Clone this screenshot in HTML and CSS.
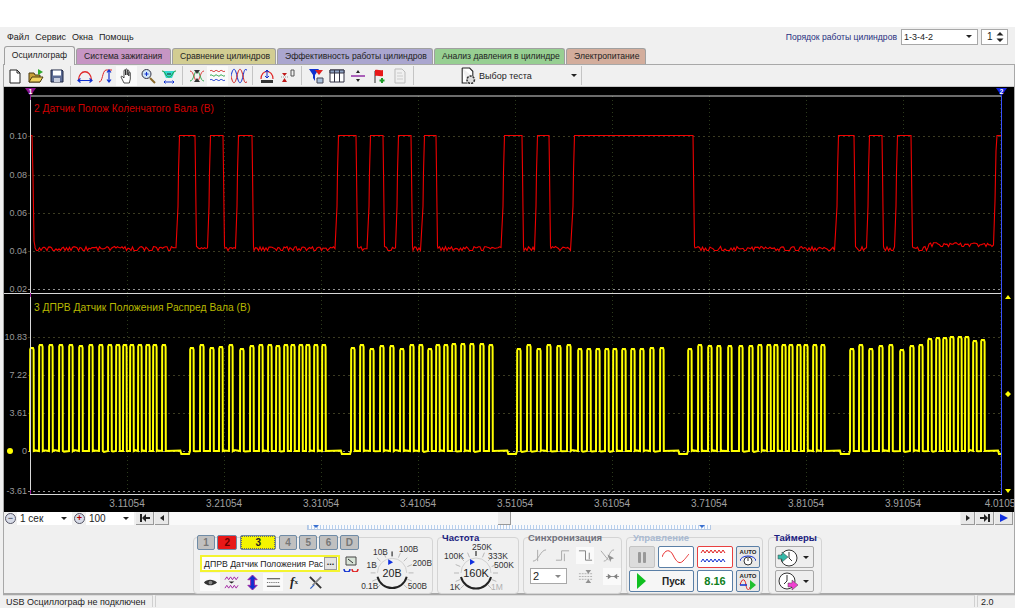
FILE: index.html

```html
<!DOCTYPE html>
<html lang="ru">
<head>
    <meta charset="UTF-8">
    <title>Осциллограф</title>
    <link rel="stylesheet" href="styles.css">
</head>
<body>
<div class="window">
    <div class="top-row">
        <div class="menu">
            <span>Файл</span><span>Сервис</span><span>Окна</span><span>Помощь</span>
        </div>
        <div class="cyl-order">
            <span class="cyl-label">Порядок работы цилиндров</span>
            <div class="combo combo-order">1-3-4-2<i class="arrow-down"></i></div>
            <div class="combo combo-spin">1
                <svg width="8" height="12" viewBox="0 0 8 12"><path d="M4 1l3.500 3.500h-7zM4 11l3.500-3.500h-7z" fill="#222"/></svg>
            </div>
        </div>
    </div>

    <div class="tabs">
        <div class="tab tab-active">Осциллограф</div>
        <div class="tab tab-ignition">Система зажигания</div>
        <div class="tab tab-compare">Сравнение цилиндров</div>
        <div class="tab tab-efficiency">Эффективность работы цилиндров</div>
        <div class="tab tab-pressure">Анализ давления в цилиндре</div>
        <div class="tab tab-power">Электропитание</div>
    </div>

    <div class="workspace">
        <div class="toolbar">
            <div class="tb"><svg viewBox="0 0 16 16"><path d="M3 2h7l3 3v10H3z" fill="#fff" stroke="#222"/><path d="M10 2v3h3" fill="none" stroke="#222"/></svg></div>
            <div class="tb"><svg viewBox="0 0 16 16"><path d="M1 14V5h5l1 2h5v7z" fill="#c9a13a" stroke="#4a3a10"/><path d="M1 14l3-5h11l-3 5z" fill="#f2d460" stroke="#4a3a10"/><path d="M10 1l5 3-5 3z" fill="#2fa82f"/></svg></div>
            <div class="tb"><svg viewBox="0 0 16 16"><path d="M2 2h11l1 1v11H2z" fill="#5d6d95" stroke="#1d2540"/><path d="M4 2.500h8v5H4z" fill="#fff"/><path d="M5 10h6v4H5z" fill="#c8cede"/></svg></div>
            <div class="tb-sep"></div>
            <div class="tb"><svg viewBox="0 0 16 16"><path d="M1.500 12C2 1 14 1 14.500 12" fill="none" stroke="#e02828" stroke-width="1.300"/><path d="M1 12.500h14M3.500 10.500l-2.500 2 2.500 2M12.500 10.500l2.500 2-2.500 2" fill="none" stroke="#1030d0" stroke-width="1.200"/></svg></div>
            <div class="tb"><svg viewBox="0 0 16 16"><path d="M1 14C5 14 4 3 8 2h6" fill="none" stroke="#e02828"/><path d="M11 2v12M9 4.500l2-2.500 2 2.500M9 11.500l2 2.500 2-2.500" fill="none" stroke="#1030d0" stroke-width="1.200"/></svg></div>
            <div class="tb tb-on"><svg viewBox="0 0 16 16"><path d="M5 15L2 9c0-1 1-1 2 0l1 1V3c0-1.500 1.500-1.500 1.500 0v4V2c0-1.500 1.700-1.500 1.700 0v5V3c0-1.500 1.600-1.500 1.600 0v5V5c0-1.300 1.500-1.300 1.500 0v6l-1 4z" fill="#fff" stroke="#222" stroke-width=".8"/></svg></div>
            <div class="tb"><svg viewBox="0 0 16 16"><circle cx="6.500" cy="6" r="4.500" fill="#cfe4f7" stroke="#334"/><path d="M10 10l5 5" stroke="#8a6a2a" stroke-width="2"/><path d="M4.500 6h4M6.500 4v4" stroke="#1030d0"/></svg></div>
            <div class="tb"><svg viewBox="0 0 16 16"><path d="M2 3h12l-3 7H5z" fill="#35d8d0"/><path d="M1 3c4 0 3 6 7 6s3-6 7-6" fill="none" stroke="#20a040"/><path d="M3 14h10M4.500 12.500L3 14l1.500 1.500M11.500 12.500L13 14l-1.500 1.500" fill="none" stroke="#1030d0"/><path d="M6 6h4" stroke="#222"/></svg></div>
            <div class="tb-sep"></div>
            <div class="tb"><svg viewBox="0 0 16 16"><path d="M1 3c4 0 4 10 7 10s3-10 7-10" fill="none" stroke="#e02828" stroke-width=".9"/><path d="M1 13c4 0 4-10 7-10s3 10 7 10" fill="none" stroke="#20a040" stroke-width=".9"/><path d="M5 2h6L8 6zM5 14h6L8 10z" fill="#333"/></svg></div>
            <div class="tb tb-on"><svg viewBox="0 0 16 16"><path d="M0 3c2-2 3 2 5 0s3 2 5 0 3 2 5 0" fill="none" stroke="#d02020"/><path d="M0 7.500c2-2 3 2 5 0s3 2 5 0 3 2 5 0" fill="none" stroke="#20a040"/><path d="M0 12c2-2 3 2 5 0s3 2 5 0 3 2 5 0" fill="none" stroke="#1030d0"/></svg></div>
            <div class="tb"><svg viewBox="0 0 16 16"><path d="M0 8c2-9 4-9 6 0s4 9 6 0 2-6 4-6" fill="none" stroke="#1030d0"/><path d="M0 8c2 9 4 9 6 0s4-9 6 0 2 6 4 6" fill="none" stroke="#d02020"/></svg></div>
            <div class="tb-sep"></div>
            <div class="tb"><svg viewBox="0 0 16 16"><path d="M2 11C2 1 14 1 14 11" fill="none" stroke="#e02828" stroke-width="1.200"/><path d="M8 2v8M6 4l2-2 2 2M6 8l2 2 2-2" fill="none" stroke="#1030d0"/><path d="M2 12h12v3H2z" fill="#333"/></svg></div>
            <div class="tb"><svg viewBox="0 0 16 16"><path d="M1 9h8" stroke="#999" stroke-dasharray="1 1"/><path d="M2 5h5L4.500 8zM2 14h5L4.500 10z" fill="#c01818"/><path d="M11 2h3v6h-3z" fill="none" stroke="#555"/></svg></div>
            <div class="tb-sep"></div>
            <div class="tb"><svg viewBox="0 0 16 16"><path d="M1 1h10L7 7v6L5 10V7z" fill="#1030d0"/><path d="M7 2h8l-4 5z" fill="#e02020"/><path d="M9 10h6v5H9z" fill="#a8c0dc" stroke="#445"/></svg></div>
            <div class="tb"><svg viewBox="0 0 16 16"><path d="M1 2h14v12H1z" fill="#fff" stroke="#334"/><path d="M1 2h14v3H1zM5.500 2v12M10.500 2v12" fill="#8fa4c4" stroke="#334"/></svg></div>
            <div class="tb"><svg viewBox="0 0 16 16"><path d="M1 8h14" stroke="#8a20a0" stroke-width="1.400"/><path d="M6 5l2-3 2 3zM6 11l2 3 2-3z" fill="#222"/></svg></div>
            <div class="tb"><svg viewBox="0 0 16 16"><path d="M4 15V3" stroke="#333"/><path d="M4 2c3-1 5 1 8 0v6c-3 1-5-1-8 0z" fill="#e81818"/><path d="M11 10v5M8.500 12.500h5" stroke="#1c9c28" stroke-width="2"/></svg></div>
            <div class="tb"><svg viewBox="0 0 16 16"><path d="M3 1h7l3 3v11H3z" fill="#f0f0f0" stroke="#bbb"/><path d="M5 5h5M5 8h6M5 11h6" stroke="#ccc"/></svg></div>
            <div class="tb-sep"></div>
            <div class="test-select">
                <svg class="test-icon" viewBox="0 0 16 16"><path d="M3 1h7l3 3v5M3 1v14h5" fill="#fff" stroke="#222"/><circle cx="11" cy="12" r="3.500" fill="#ddd" stroke="#333" stroke-width="1.500" stroke-dasharray="2 1"/></svg>
                <span class="test-label">Выбор теста</span>
                <i class="arrow-down"></i>
            </div>
            <div class="tb-sep"></div>
        </div>

        <svg class="scope" id="scope" width="1010" height="425" viewBox="4 86 1010 425">
            <g id="grid"></g>
            <path id="trace-crank" fill="none" stroke="#f00000" stroke-width="1.100"/>
            <path id="trace-cam" fill="none" stroke="#ffff00" stroke-width="2"/>
            <path d="M30.500 95V493" stroke="#d8d8d8"/>
            <path d="M30 95H1002M4 292.500H1002M30 493.500H1002" stroke="#d8d8d8"/>
            <path d="M1001.500 95V493" stroke="#3a50ff"/>
            <path d="M30.500 95v4M30.500 292v4M30.500 489v4" stroke="#a020a0"/>
            <path d="M25 87h11l-5.500 8z" fill="#8a108a"/>
            <text class="marker" x="30.500" y="92.500">1</text>
            <path d="M996 87h11l-5.500 8z" fill="#1020e0"/>
            <text class="marker" x="1001.500" y="92.500">2</text>
            <circle cx="10" cy="450" r="3" fill="#ffff00"/>
            <path d="M1005 298l3-4 3 4zM1005 488l3 4 3-4zM1008 390l3 3-3 3-3-3z" fill="#ffff00"/>
            <text class="title-crank" x="34" y="111">2 Датчик Полож Коленчатого Вала (В)</text>
            <text class="title-cam" x="34" y="310">3 ДПРВ Датчик Положения Распред Вала (В)</text>
        </svg>

        <div class="nav-row">
            <span class="round-btn">&minus;</span>
            <div class="nav-combo nav-combo-time">1 сек<i class="arrow-down"></i></div>
            <span class="round-btn round-btn-red">+</span>
            <div class="nav-combo nav-combo-count">100<i class="arrow-down"></i></div>
            <div class="nav-btn nav-btn-wide"><svg width="12" height="8" viewBox="0 0 12 8"><path d="M1 0h2v8H1zM3 4l4-4v3h4v2H7v3z" fill="#222"/></svg></div>
            <div class="nav-btn"><i class="tri-left"></i></div>
            <div class="nav-track"><div class="nav-thumb"></div></div>
            <div class="nav-btn"><i class="tri-right"></i></div>
            <div class="nav-btn nav-btn-wide"><svg width="12" height="8" viewBox="0 0 12 8"><path d="M9 0h2v8H9zM1 3h4V0l4 4-4 4V5H1z" fill="#222"/></svg></div>
            <div class="nav-btn nav-btn-wide"><i class="tri-right tri-blue"></i></div>
        </div>

        <div class="bottom">
            <div class="splitter"><i></i><i></i></div>
            <div class="panels">
                <div class="group group-channel">
                    <div class="channel-left">
                        <div class="channels">
                            <div class="ch">1</div>
                            <div class="ch ch-red">2</div>
                            <div class="ch ch-yellow">3</div>
                            <div class="ch">4</div>
                            <div class="ch">5</div>
                            <div class="ch">6</div>
                            <div class="ch ch-wide">D</div>
                        </div>
                        <div class="sensor-row">
                            <div class="sensor-box"><span class="sensor-name">ДПРВ Датчик Положения Рас</span><span class="dots-btn">...</span></div>
                            <svg class="sensor-icon" viewBox="0 0 16 16"><path d="M3 1h10v8H3z" fill="#d8e4d8" stroke="#444"/><path d="M5 3l5 4" stroke="#333"/><path d="M1 13a3 3 0 0 0 6 0" fill="none" stroke="#1030d0" stroke-width="1.400"/><path d="M9 13a3 3 0 0 0 6 0" fill="none" stroke="#e02020" stroke-width="1.400"/></svg>
                        </div>
                        <div class="channel-tools">
                            <div class="ct ct-on"><svg viewBox="0 0 16 16"><path d="M1 8c3-4 10-4 14 0-4 4-11 4-14 0z" fill="#333"/><circle cx="8" cy="8" r="2" fill="#888"/></svg></div>
                            <div class="ct"><svg viewBox="0 0 16 16"><path d="M1 5l2-3 2 3 2-3 2 3 2-3 2 3 2-3" fill="none" stroke="#a020a0"/><path d="M1 14l2-3 2 3 2-3 2 3 2-3 2 3 2-3" fill="none" stroke="#a020a0"/><path d="M5 7h6L8 9z" fill="#222"/></svg></div>
                            <div class="ct"><svg viewBox="0 0 16 16"><path d="M8 0l5 5h-3v6h3l-5 5-5-5h3V5H3z" fill="#1030d0" stroke="#a020a0"/></svg></div>
                            <div class="ct ct-on"><svg viewBox="0 0 16 16"><path d="M1 4h14M1 12h14" stroke="#333"/><path d="M1 8h14" stroke="#555" stroke-dasharray="1 1"/></svg></div>
                            <div class="ct ct-fx"><i>f</i><small>x</small></div>
                            <div class="ct"><svg viewBox="0 0 16 16"><path d="M2 2l12 12" stroke="#333" stroke-width="2"/><path d="M14 2L5 11" stroke="#888" stroke-width="2"/><path d="M6 10l-4 4 1 1 4-4z" fill="#3060c0"/></svg></div>
                        </div>
                    </div>
                    <svg class="knob" id="knob-volt" width="75" height="50" viewBox="358 543 75 50"></svg>
                </div>

                <div class="group group-freq">
                    <div class="group-title title-navy">Частота</div>
                    <svg class="knob knob-freq" id="knob-freq" width="76" height="52" viewBox="440 541 76 52"></svg>
                </div>

                <div class="group group-sync">
                    <div class="group-title title-grey">Синхронизация</div>
                    <div class="sync-row">
                        <svg viewBox="0 0 16 16"><path d="M1 14C7 14 9 2 15 2M6 2v12" fill="none" stroke="#a8a8a8"/></svg>
                        <svg viewBox="0 0 16 16"><path d="M1 13h6V3h8M10 6v8" fill="none" stroke="#a8a8a8"/></svg>
                        <div class="sync-on"><svg viewBox="0 0 16 16"><path d="M1 3h7v10h7M12 5v7" fill="none" stroke="#808080"/></svg></div>
                        <svg viewBox="0 0 16 16"><path d="M1 3l8 10M15 2C9 2 10 14 4 14" fill="none" stroke="#a8a8a8"/><path d="M8 7l7 4-3 1-1 3z" fill="#909090"/></svg>
                    </div>
                    <div class="sync-row sync-row-low">
                        <div class="combo combo-sync">2<i class="arrow-down arrow-grey"></i></div>
                        <svg viewBox="0 0 16 16"><path d="M1 5h14M1 8h14M1 11h14" stroke="#b0b0b0" stroke-dasharray="2 1"/><path d="M8 1h6l-3 4zM8 15h6l-3-4z" fill="#909090"/></svg>
                        <div class="sync-on sync-wide"><svg viewBox="0 0 16 16"><path d="M1 8h14" stroke="#909090"/><path d="M3 5l4 3-4 3zM13 5L9 8l4 3z" fill="#808080"/></svg></div>
                    </div>
                </div>

                <div class="group group-control">
                    <div class="group-title title-pale">Управление</div>
                    <div class="ctl-row">
                        <div class="ctl ctl-pause"><i></i><i></i></div>
                        <div class="ctl ctl-mid"><svg width="28" height="16" viewBox="0 0 28 16"><path d="M0 8C3 0 8 0 11 6s6 10 10 6 4-5 6-7" fill="none" stroke="#e83030"/></svg></div>
                        <div class="ctl ctl-mid ctl-red"><svg width="30" height="18" viewBox="0 0 30 18"><path d="M1 5l2-3 2 3 2-3 2 3 2-3 2 3 2-3 2 3 2-3 2 3 2-3 2 3" fill="none" stroke="#e02020"/><path d="M1 14l2-3 2 3 2-3 2 3 2-3 2 3 2-3 2 3 2-3 2 3 2-3 2 3" fill="none" stroke="#1030d0"/></svg></div>
                        <div class="ctl ctl-auto"><span class="auto-text">AUTO</span><svg width="16" height="11" viewBox="0 0 16 11"><circle cx="8" cy="6" r="4" fill="#fff" stroke="#333"/><path d="M0 6a8 5 0 0 1 16 0" fill="none" stroke="#1030d0"/><path d="M8 3v3" stroke="#333"/></svg></div>
                    </div>
                    <div class="ctl-row">
                        <div class="ctl ctl-start"><i class="tri-green"></i><span>Пуск</span></div>
                        <div class="ctl ctl-mid ctl-time">8.16</div>
                        <div class="ctl ctl-auto"><span class="auto-text">AUTO</span><svg width="18" height="11" viewBox="0 0 18 11"><path d="M1 6c2-7 5-7 6 0s4 5 4 2" fill="none" stroke="#e02020"/><path d="M1 6h7" stroke="#1030d0" stroke-width="1.500"/><path d="M11 1l6 5-6 5z" fill="#20c030"/></svg></div>
                    </div>
                </div>

                <div class="group group-timers">
                    <div class="group-title title-navy">Таймеры</div>
                    <div class="timer-btn">
                        <svg width="22" height="19" viewBox="0 0 22 19"><circle cx="12" cy="10" r="8" fill="#fff" stroke="#333"/><path d="M12 4v6l3 3" fill="none" stroke="#333"/><path d="M1 7h4V4l6 5-6 5v-3H1z" fill="#35b8a8" stroke="#444" stroke-width=".5"/></svg>
                        <i class="arrow-down"></i>
                    </div>
                    <div class="timer-btn">
                        <svg width="22" height="20" viewBox="0 0 22 20"><circle cx="10" cy="10" r="8" fill="#fff" stroke="#333"/><path d="M10 4v6l-3 3" fill="none" stroke="#333"/><path d="M11 12h4V9l6 5-6 5v-3h-4z" fill="#f040d0" stroke="#444" stroke-width=".5"/></svg>
                        <i class="arrow-down"></i>
                    </div>
                </div>
            </div>
        </div>
    </div>

    <div class="status">
        <div class="status-cell status-main">USB Осциллограф не подключен</div>
        <div class="status-cell status-fill"></div>
        <div class="status-cell status-ver">2.0</div>
    </div>
</div>
<script src="chart.js"></script>
</body>
</html>
```

FILE: styles.css

```css
* {
    box-sizing: border-box;
}

body {
    margin: 0;
    background-color: #ffffff;
    font-family: "Liberation Sans", Arial, sans-serif;
    font-size: 9px;
    color: #222;
    overflow: hidden;
    white-space: nowrap;
}

.window {
    width: 1015px;
    height: 581px;
    margin-top: 27px;
    background-color: #f0f0f0;
}

.top-row {
    height: 19px;
    display: flex;
    justify-content: space-between;
    align-items: center;
    padding-left: 7px;
    padding-right: 7px;
}

.menu {
    display: flex;
    gap: 6px;
    padding-top: 1px;
}

.cyl-order {
    display: flex;
    align-items: center;
}

.cyl-label {
    color: #28307f;
    margin-right: 4px;
    font-size: 8.600px;
}

.combo {
    height: 16px;
    background-color: #fff;
    border: 1px solid #a8a8a8;
    display: flex;
    align-items: center;
    justify-content: space-between;
    padding: 0 3px 0 2px;
}

.combo-order {
    width: 77px;
    margin-right: 3px;
}

.combo-spin {
    width: 27px;
    padding-left: 5px;
    font-size: 10px;
}

.arrow-down {
    display: inline-block;
    width: 0;
    height: 0;
    border-left: 3px solid transparent;
    border-right: 3px solid transparent;
    border-top: 3px solid #222;
    margin: 0 2px;
}

.arrow-grey {
    border-top-color: #888;
}

.tabs {
    height: 18px;
    display: flex;
    align-items: flex-end;
    padding-left: 4px;
    padding-right: 0;
}

.tab {
    height: 16px;
    line-height: 15px;
    padding: 0 7px;
    margin-right: 1px;
    border: 1px solid #a0a0a0;
    border-bottom: none;
    border-radius: 3px 3px 0 0;
    font-size: 8.600px;
}

.tab-active {
    height: 19px;
    line-height: 17px;
    background-color: #f0f0f0;
    width: 71px;
    text-align: center;
    padding: 0;
    position: relative;
    z-index: 1;
    margin-bottom: -1px;
}

.tab-ignition {
    background-color: #c695c4;
    width: 95px;
}

.tab-compare {
    background-color: #d2cd92;
    width: 104px;
}

.tab-efficiency {
    background-color: #aaa6cf;
    width: 156px;
}

.tab-pressure {
    background-color: #97cf92;
    width: 131px;
}

.tab-power {
    background-color: #d3ad9c;
    width: 80px;
}

.workspace {
    width: 1012px;
    margin-left: 3px;
    border-left: 1px solid #a8a8a8;
    border-right: 1px solid #a8a8a8;
}

.toolbar {
    height: 23px;
    border-top: 1px solid #a8a8a8;
    border-bottom: 1px solid #c8c8c8;
    display: flex;
    align-items: center;
}

.tb {
    width: 21px;
    height: 20px;
    display: flex;
    align-items: center;
    justify-content: center;
}

.tb svg {
    width: 16px;
    height: 16px;
}

.tb-on {
    background-color: #fafafa;
}

.tb-sep {
    width: 1px;
    height: 19px;
    margin: 0 3px;
    background-color: #c4c4c4;
}

.test-select {
    width: 161px;
    display: flex;
    align-items: center;
    padding-left: 42px;
}

.test-icon {
    width: 17px;
    height: 17px;
    flex-shrink: 0;
}

.test-label {
    margin-left: 3px;
    margin-right: 37px;
}

.scope {
    display: block;
    background-color: #000;
}

.scope text {
    font-family: "Liberation Sans", Arial, sans-serif;
}

.marker {
    font-size: 7px;
    font-weight: bold;
    fill: #fff;
    text-anchor: middle;
}

.title-crank {
    font-size: 10.200px;
    fill: #d00000;
}

.title-cam {
    font-size: 10.300px;
    fill: #b8b800;
}

.tick-y {
    font-size: 9px;
    fill: #9a9a9a;
    text-anchor: end;
}

.tick-x {
    font-size: 10px;
    fill: #a0a0a0;
    text-anchor: middle;
}

.nav-row {
    height: 13px;
    display: flex;
    align-items: stretch;
    padding-left: 1px;
    font-size: 10px;
}

.round-btn {
    width: 11px;
    height: 11px;
    margin: 1px 1px 0 0;
    border: 1px solid #556;
    border-radius: 50%;
    background-color: #d8dce8;
    font-size: 9px;
    line-height: 8px;
    text-align: center;
    color: #223;
}

.round-btn-red {
    color: #b00000;
    margin-left: 2px;
    font-weight: bold;
}

.nav-combo {
    background-color: #fff;
    display: flex;
    align-items: center;
    justify-content: space-between;
    padding: 0 3px 0 3px;
}

.nav-combo-time {
    width: 55px;
}

.nav-combo-count {
    width: 48px;
    margin-right: 2px;
}

.nav-btn {
    width: 14px;
    background-color: #e8e8e8;
    border-right: 1px solid #999;
    border-bottom: 1px solid #999;
    display: flex;
    align-items: center;
    justify-content: center;
    margin-right: 1px;
}

.nav-btn-wide {
    width: 18px;
}

.tri-left {
    border-top: 3px solid transparent;
    border-bottom: 3px solid transparent;
    border-right: 4px solid #222;
}

.tri-right {
    border-top: 3px solid transparent;
    border-bottom: 3px solid transparent;
    border-left: 4px solid #222;
}

.tri-blue {
    border-top-width: 4px;
    border-bottom-width: 4px;
    border-left: 8px solid #1030e0;
}

.nav-track {
    flex: 1;
    background-color: #f9f9f9;
    padding-left: 328px;
    margin-right: 1px;
}

.nav-thumb {
    width: 13px;
    height: 13px;
    background-color: #ececec;
    border-right: 1px solid #999;
    border-bottom: 1px solid #999;
}

.bottom {
    height: 70px;
    border-bottom: 2px solid #a8a8a8;
}

.splitter {
    width: 404px;
    height: 5px;
    margin-left: 303px;
    border: 1px solid #b4c8e4;
    border-top: none;
    background: repeating-linear-gradient(90deg, #b8d0ec 0, #b8d0ec 1px, #fafafc 1px, #fafafc 3px);
    display: flex;
    justify-content: space-between;
    padding: 0 5px;
}

.splitter i {
    width: 0;
    height: 0;
    border-left: 3px solid transparent;
    border-right: 3px solid transparent;
    border-top: 3px solid #3a70d0;
}

.panels {
    display: flex;
    margin-top: 7px;
    margin-left: 189px;
    gap: 4px;
}

.group {
    height: 57px;
    border: 1px solid #d4d4d4;
    border-radius: 4px;
}

.group-channel {
    width: 240px;
    display: flex;
    padding-left: 6px;
}

.channel-left {
    width: 159px;
}

.channels {
    display: flex;
    gap: 2px;
    margin-top: -3px;
    margin-left: -3px;
    font-size: 10px;
}

.ch {
    width: 19px;
    height: 15px;
    line-height: 13px;
    text-align: center;
    background-color: #c0c0c0;
    border: 1px solid #6f8ba6;
    border-radius: 2px;
    color: #777;
    font-weight: bold;
}

.ch-red {
    background-color: #e81818;
    color: #600;
    width: 21px;
}

.ch-yellow {
    background-color: #f4f400;
    color: #222;
    width: 37px;
    margin-left: 1px;
    margin-right: 1px;
    outline: 1px dotted #666;
    outline-offset: -2px;
}

.ch-wide {
    width: 20px;
}

.sensor-row {
    display: flex;
    align-items: center;
    margin-top: 5px;
}

.sensor-box {
    width: 140px;
    height: 17px;
    border: 2px solid #f4f430;
    background-color: #fff;
    display: flex;
    align-items: center;
    justify-content: space-between;
    padding-left: 2px;
    padding-right: 1px;
}

.sensor-name {
    font-size: 8.700px;
}

.dots-btn {
    width: 13px;
    height: 13px;
    line-height: 8px;
    text-align: center;
    background-color: #e4e4e4;
    border: 1px solid #999;
    font-weight: bold;
}

.sensor-icon {
    width: 16px;
    height: 16px;
    margin-left: 3px;
}

.channel-tools {
    display: flex;
    gap: 1px;
    margin-top: 1px;
}

.ct {
    width: 20px;
    height: 18px;
    display: flex;
    align-items: center;
    justify-content: center;
}

.ct svg {
    width: 15px;
    height: 15px;
}

.ct-on {
    background-color: #fafafa;
}

.ct-fx {
    font-family: "Liberation Serif", serif;
    font-size: 13px;
    font-weight: bold;
}

.ct-fx small {
    font-size: 7px;
}

.knob {
    display: block;
    margin-top: 6px;
}

.knob text {
    font-size: 8.500px;
    fill: #333;
    font-family: "Liberation Sans", Arial, sans-serif;
    text-anchor: middle;
}

.knob .knob-value {
    font-size: 11px;
    fill: #222;
}

.knob .knob-off {
    fill: #b0b0b0;
}

.group-title {
    margin-top: -6px;
    margin-left: 4px;
    margin-bottom: 3px;
    height: 11px;
    line-height: 11px;
    font-size: 9.500px;
    font-weight: bold;
}

.title-navy {
    color: #1a2080;
}

.title-grey {
    color: #70707c;
}

.title-pale {
    color: #a9bad2;
}

.group-freq {
    width: 82px;
}

.knob-freq {
    margin-top: -4px;
    margin-left: 2px;
}

.group-sync {
    width: 99px;
}

.sync-row {
    display: flex;
    align-items: center;
    padding-left: 8px;
    gap: 8px;
    height: 18px;
    margin-top: 2px;
}

.sync-row svg {
    width: 15px;
    height: 15px;
}

.sync-row-low {
    margin-top: 3px;
    padding-left: 6px;
}

.sync-on {
    width: 18px;
    height: 17px;
    background-color: #fafafa;
    display: flex;
    align-items: center;
    justify-content: center;
    margin: 0 -2px;
}

.sync-wide {
    margin-left: 2px;
}

.combo-sync {
    width: 37px;
    margin-right: 3px;
    font-size: 11px;
}

.group-control {
    width: 137px;
    padding-left: 2px;
}

.ctl-row {
    display: flex;
    gap: 3px;
    margin-bottom: 2px;
}

.ctl {
    height: 22px;
    border: 1px solid #5a7fa6;
    border-radius: 2px;
    background-color: #f6f6f6;
    display: flex;
    align-items: center;
    justify-content: center;
}

.ctl-pause {
    width: 26px;
    gap: 2px;
    background-color: #dcdcdc;
    border-color: #c4c4c4;
}

.ctl-pause i {
    width: 3px;
    height: 11px;
    background-color: #999;
    border-radius: 1px;
}

.ctl-mid {
    width: 36px;
    background-color: #fff;
}

.ctl-red {
    border-color: #e84040;
}

.ctl-auto {
    width: 24px;
    flex-direction: column;
    background-color: #e8e8e8;
}

.auto-text {
    font-size: 6px;
    line-height: 6px;
    font-weight: bold;
}

.ctl-start {
    width: 65px;
    justify-content: flex-start;
    padding-left: 7px;
    gap: 16px;
    font-weight: bold;
    font-size: 10px;
}

.tri-green {
    border-top: 8px solid transparent;
    border-bottom: 8px solid transparent;
    border-left: 9px solid #10c020;
}

.ctl-time {
    color: #108020;
    font-weight: bold;
    font-size: 11px;
}

.group-timers {
    width: 54px;
    margin-left: 1px;
    padding-left: 6px;
}

.group-timers .group-title {
    margin-left: -1px;
}

.timer-btn {
    width: 39px;
    height: 22px;
    margin-bottom: 2px;
    background-color: #eeeeee;
    border: 1px solid #a8a8a8;
    border-radius: 2px;
    display: flex;
    align-items: center;
    justify-content: space-between;
    padding: 0 2px 0 1px;
}

.status {
    display: flex;
    height: 12px;
    gap: 2px;
    line-height: 12px;
    padding-left: 3px;
}

.status-cell {
    border-top: 1px solid #dcdcdc;
    padding-left: 3px;
}

.status-main {
    width: 150px;
    border-right: 1px solid #d0d0d0;
}

.status-fill {
    flex: 1;
    border-left: 1px solid #d0d0d0;
    border-right: 1px solid #d0d0d0;
}

.status-ver {
    width: 38px;
    border-left: 1px solid #d0d0d0;
}
```

FILE: chart.js

```js
// crank sensor: [rise, fall] of each high section
var crankPulses = [[178, 195], [209, 223], [237, 252], [337, 356], [369, 383], [397, 411], [423, 436],
    [503, 522], [536, 549], [573, 693], [837, 854], [868, 882], [896, 911]];

// cam sensor: [center, top]
var camPulses = [[32, 347], [41, 344], [51, 344], [61, 344], [71, 344], [81, 345], [91, 344], [101, 344],
    [110, 344], [118, 344], [125, 344], [132, 344], [140, 344], [148, 344], [155, 344], [164, 344],
    [192, 347], [202, 344], [212, 347], [221, 346], [231, 344], [242, 348], [252, 345], [261, 344],
    [270, 344], [278, 345], [286, 344], [293, 344], [301, 344], [308, 344], [316, 344], [324, 344],
    [353, 347], [362, 344], [372, 348], [382, 345], [392, 345], [402, 348], [412, 344], [421, 344],
    [430, 348], [438, 344], [446, 344], [454, 343], [463, 343], [472, 343], [482, 343], [491, 344],
    [519, 348], [529, 344], [539, 348], [549, 344], [559, 345], [569, 344], [580, 348], [589, 348],
    [598, 348], [607, 348], [615, 348], [624, 348], [633, 348], [642, 348], [652, 347], [662, 347],
    [690, 348], [700, 344], [710, 345], [719, 345], [730, 345], [741, 345], [751, 345], [760, 344],
    [769, 344], [776, 344], [784, 344], [791, 344], [799, 344], [806, 344], [815, 344], [823, 344],
    [852, 348], [861, 344], [871, 348], [881, 345], [891, 344], [902, 349], [912, 345], [921, 344],
    [930, 338], [938, 337], [945, 337], [952, 336], [960, 336], [967, 336], [975, 340], [983, 339]];

var seed = 7;
function rnd() {
    seed = (seed * 9301 + 49297) % 233280;
    return seed / 233280;
}

function noisyLow(from, to, level) {
    var d = "";
    for (var x = from; x < to; x += 1.5) {
        var dip = rnd() < 0.25 ? 4 : rnd() * 2.5;
        d += "L" + x.toFixed(1) + " " + (level + dip).toFixed(1);
    }
    return d;
}

function drawCrank() {
    var high = 134.500, low = 245.500;
    var d = "M31 " + high + "L32 " + high + "L33 175L34 240L35 " + low;
    var last = 35;
    crankPulses.forEach(function(p) {
        d += noisyLow(last, p[0] - 1, low);
        d += "L" + p[0] + " " + (low - 40) + "L" + (p[0] + 0.5) + " " + (low - 75) + "L" + (p[0] + 1.5) + " " + high;
        d += "L" + p[1] + " " + high + "L" + (p[1] + 0.5) + " " + (high + 35) + "L" + (p[1] + 1) + " " + (high + 75) + "L" + (p[1] + 1.5) + " " + low;
        last = p[1] + 2;
    });
    d += noisyLow(last, 929, low);
    d += noisyLow(929, 994, low - 4);
    d += "L995 200L996 150L997 " + high + "L1001 " + high;
    document.getElementById("trace-crank").setAttribute("d", d);
}

function drawCam() {
    var d = "M31 450";
    var last = 31;
    camPulses.forEach(function(p) {
        var c = p[0], top = p[1];
        if (c - last > 15) {
            var mid = last + (c - last) * 0.55;
            d += "L" + mid + " 449.500L" + (mid + 1) + " 453L" + (c - 3) + " 453";
        } else if (c - last > 5) {
            d += "L" + (last + 1) + " " + (449 + rnd() * 2).toFixed(1);
        }
        // straight sides, the gap between two pulses stays black
        d += "L" + (c - 2) + " 450L" + (c - 1.800) + " " + (top + 1.500) + "L" + (c - 1.200) + " " + top + "L" + (c + 1) + " " + top;
        d += "L" + (c + 1.600) + " " + (top + 2) + "L" + (c + 1.800) + " 450";
        last = c + 2;
    });
    d += "L998 449.500L999 453L1001 453";
    document.getElementById("trace-cam").setAttribute("d", d);
}

function drawGrid() {
    var grid = "", i;
    var xs = [127, 224, 321, 418, 515, 612, 709, 806, 903, 1000];
    var labels = ["3.11054", "3.21054", "3.31054", "3.41054", "3.51054", "3.61054", "3.71054", "3.81054", "3.91054", "4.0105"];
    xs.forEach(function(x, n) {
        grid += '<path d="M' + (x + 0.5) + ' 95V493" stroke="#2c3a1c" stroke-dasharray="1 3"/>';
        grid += '<text class="tick-x" x="' + x + '" y="506">' + labels[n] + "</text>";
    });
    var rows = [[135, "0.10"], [174, "0.08"], [212, "0.06"], [250, "0.04"], [288, "0.02"],
        [336, "10.83"], [374, "7.22"], [412, "3.61"], [450, "0"], [490, "-3.61"]];
    for (i = 0; i < rows.length; i++) {
        var y = rows[i][0];
        var bright = y == 288 || y == 490 || y == 450;
        grid += '<path d="M28 ' + (y + 0.5) + 'H1001" stroke="' + (bright ? "#909090" : "#3c3c22") + '" stroke-dasharray="2 3"/>';
        grid += '<text class="tick-y" x="27" y="' + (y + 3) + '">' + rows[i][1] + "</text>";
    }
    document.getElementById("grid").innerHTML = grid;
}

function drawKnob(id, cx, cy, labels, value, pointerX, pointerY) {
    var s = "", a;
    for (a = 135; a <= 405; a += 22.5) {
        var r = a * Math.PI / 180;
        s += '<line x1="' + (cx + 17 * Math.cos(r)) + '" y1="' + (cy + 17 * Math.sin(r)) + '" x2="' + (cx + 22 * Math.cos(r)) + '" y2="' + (cy + 22 * Math.sin(r)) + '" stroke="#b8b8b8"/>';
    }
    s += '<line x1="' + cx + '" y1="' + (cy - 17) + '" x2="' + cx + '" y2="' + (cy - 22) + '" stroke="#222"/>';
    s += '<path d="M' + (cx - 15) + " " + (cy + 4) + "A15.500 15.500 0 0 0 " + (cx + 15) + " " + (cy + 4) + '" fill="none" stroke="#222" stroke-width="2"/>';
    s += '<path d="M' + (cx - 15) + " " + cy + "A15 15 0 0 1 " + (cx + 15) + " " + cy + '" fill="none" stroke="#d0d0d0"/>';
    s += '<path d="M' + pointerX + " " + pointerY + "l5 3-5 3z" + '" fill="#1030e0"/>';
    s += '<text class="knob-value" x="' + cx + '" y="' + (cy + 4) + '">' + value + "</text>";
    labels.forEach(function(l) {
        s += '<text x="' + l[1] + '" y="' + l[2] + '"' + (l[3] ? ' class="knob-off"' : "") + ">" + l[0] + "</text>";
    });
    document.getElementById(id).innerHTML = s;
}

drawGrid();
drawCrank();
drawCam();
drawKnob("knob-volt", 392, 572, [["10В", 380, 554], ["100В", 409, 551], ["200В", 423, 565], ["1В", 371, 567], ["0.1В", 369, 589], ["500В", 418, 589]], "20В", 388, 558);
drawKnob("knob-freq", 476, 572, [["250K", 482, 549], ["100K", 454, 558], ["333K", 498, 558], ["500K", 504, 567], ["1K", 455, 589], ["1M", 497, 589, true]], "160K", 470, 558);
```
